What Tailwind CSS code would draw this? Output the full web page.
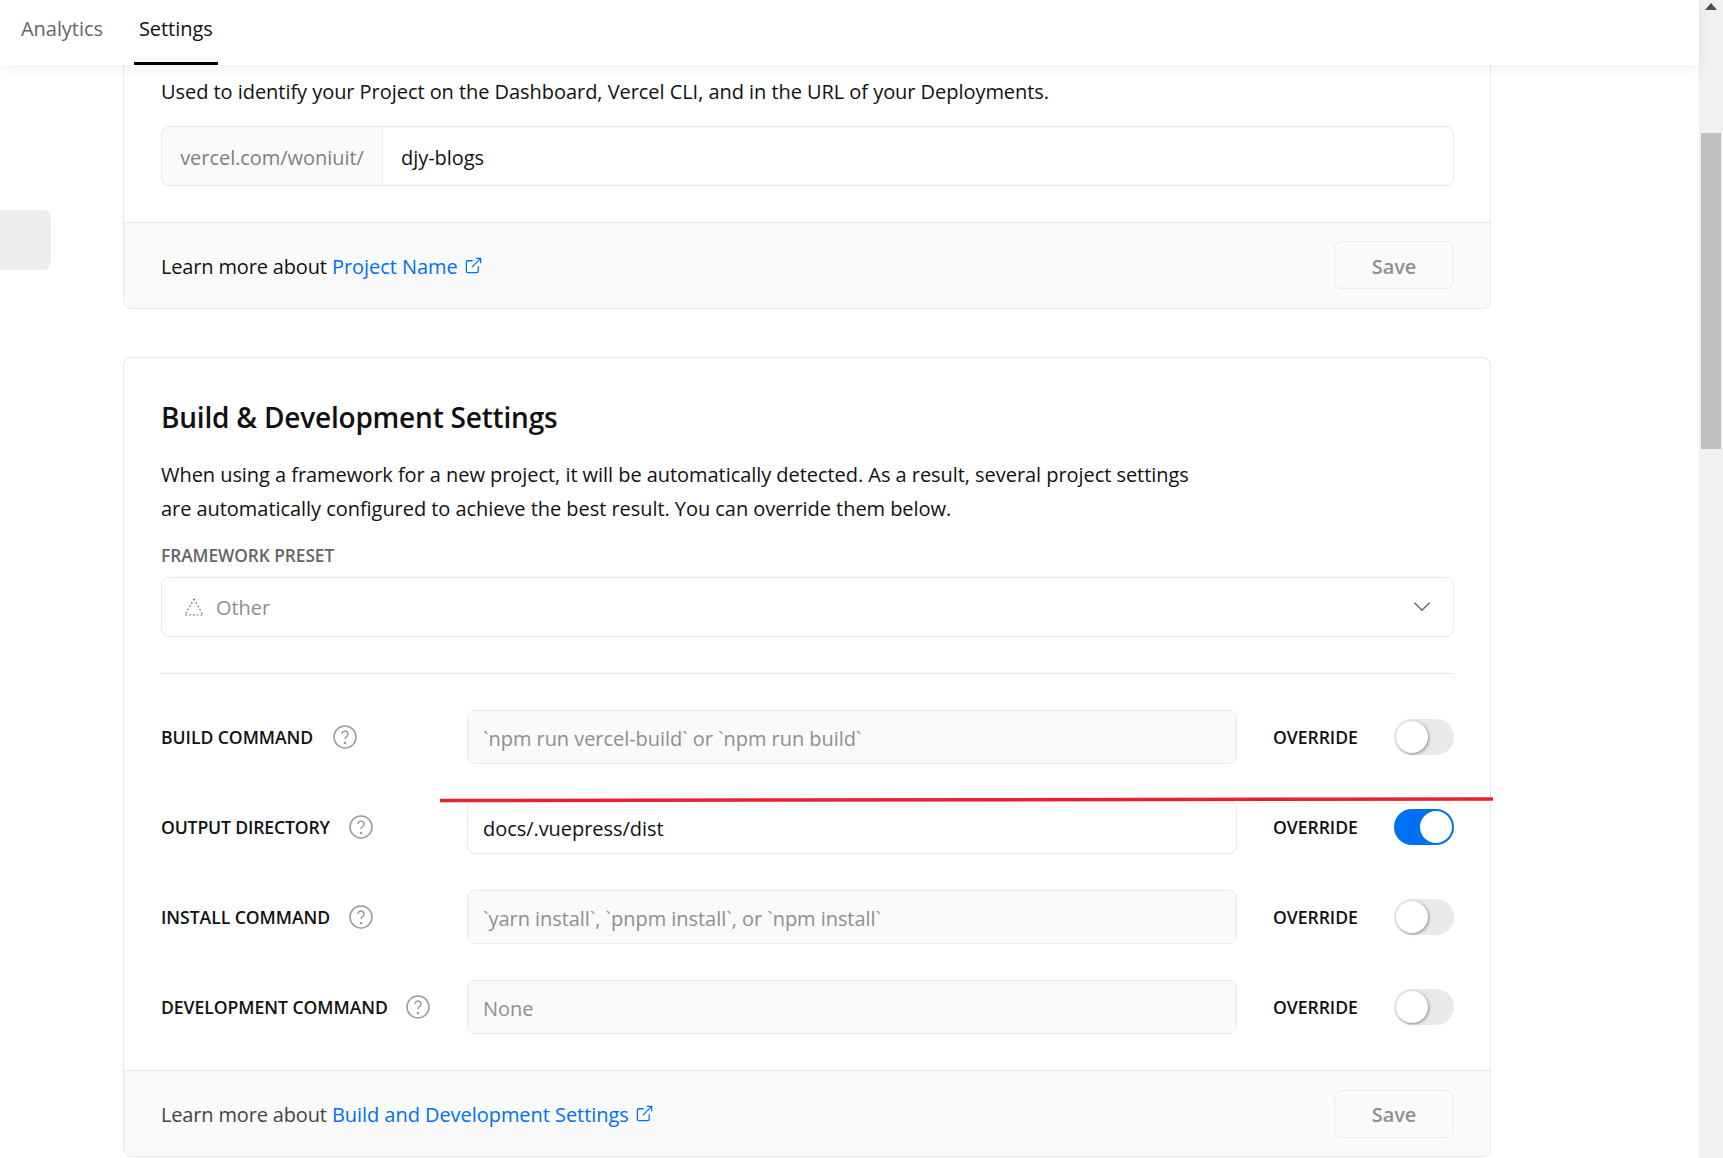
<!DOCTYPE html>
<html lang="en">
<head>
<meta charset="UTF-8">
<title>Project Settings</title>
<script src="https://cdn.jsdelivr.net/npm/@tailwindcss/browser@4"></script>
</head>
<body class="h-[1158px] overflow-hidden bg-white font-['Open_Sans',sans-serif] text-[20px] tracking-[-0.05px] text-[#111]">
<div class="relative h-[1158px]">

  <!-- top tabs -->
  <div class="absolute left-0 top-0 z-10 flex h-[65px] w-[1699px] items-start bg-white pl-[21px] shadow-[0_2px_14px_rgba(0,0,0,0.08)]">
    <div class="pt-[14px] text-[#666]">Analytics</div>
    <div class="ml-[31px] h-[65px] border-b-[3px] border-black px-[5px] pt-[14px]">Settings</div>
  </div>

  <!-- scrollbar -->
  <div class="absolute right-0 top-0 h-full w-[24px] bg-[#f1f1f1]">
    <svg class="absolute left-[6px] top-[3px]" width="12" height="7" viewBox="0 0 12 7"><path d="M6 0 12 7H0Z" fill="#505050"/></svg>
    <div class="mx-[2px] mt-[133px] h-[316px] bg-[#bfbfbf]"></div>
  </div>

  <div class="absolute left-0 top-[210px] h-[60px] w-[51px] rounded-r-lg bg-[#ededed]"></div>

  <main class="ml-[123px] w-[1368px]">
    <!-- project name card -->
    <section class="h-[309px] rounded-b-lg border border-t-0 border-[#eaeaea]">
      <div class="h-[222px] pl-[37px] pt-[76px]">
        <p class="leading-[32px]">Used to identify your Project on the Dashboard, Vercel CLI, and in the URL of your Deployments.</p>
        <div class="mt-[18px] flex h-[60px] w-[1293px] rounded-lg border border-[#eaeaea]">
          <div class="flex w-[221px] items-center justify-center rounded-l-lg border-r border-[#eaeaea] bg-[#fafafa] pt-[4px] text-[#808080]">vercel.com/woniuit/</div>
          <div class="flex items-center pl-[18px] pt-[4px]">djy-blogs</div>
        </div>
      </div>
      <div class="flex h-[86px] items-center justify-between rounded-b-lg border-t border-[#eaeaea] bg-[#fafafa] pl-[37px] pr-[36px]">
        <p class="pt-[2px]"><span class="tracking-[-0.16px]">Learn more about</span> <a class="text-[#0070f3]">Project Name</a>
          <svg class="ml-[1px] inline-block align-[-1px] text-[#0070f3]" width="19" height="19" viewBox="0 0 24 24" fill="none" stroke="currentColor" stroke-width="1.6"><path d="M18 13v6a2 2 0 0 1-2 2H5a2 2 0 0 1-2-2V8a2 2 0 0 1 2-2h6"/><path d="M15 3h6v6"/><path d="M10 14 21 3"/></svg>
        </p>
        <button class="mb-[2px] h-[48px] w-[120px] rounded-lg border border-[#eaeaea] pt-[4px] font-semibold text-[#8f8f8f]">Save</button>
      </div>
    </section>

    <!-- build card -->
    <section class="mt-[48px] h-[800px] rounded-lg border border-[#eaeaea]">
      <div class="pl-[37px]">
        <h2 class="pt-[40px] text-[28px] font-semibold leading-[38px] tracking-[-0.2px]">Build &amp; Development Settings</h2>
        <p class="mt-[22px] w-[1040px] leading-[34px]">When using a framework for a new project, it will be automatically detected. As a result, several project settings are automatically configured to achieve the best result. You can override them below.</p>
        <div class="mt-[18px] text-[17.3px] font-semibold leading-[24px] text-[#666]">FRAMEWORK PRESET</div>
        <div class="mt-[9px] flex h-[60px] w-[1293px] items-center rounded-lg border border-[#eaeaea] px-[21px] text-[#8f8f8f]">
          <svg width="22" height="20" viewBox="0 0 22 20" fill="none" stroke="#666" stroke-width="1.1" stroke-dasharray="1.8 2"><path d="M11 2 20 18H2Z"/></svg>
          <span class="ml-[11px] pt-[2px]">Other</span>
          <svg class="ml-auto" width="20" height="20" viewBox="0 0 24 24" fill="none" stroke="#666" stroke-width="1.7"><path d="m3 7 9 9 9-9"/></svg>
        </div>
        <div class="mt-[36px] w-[1293px] border-t border-[#eaeaea]"></div>
        <div class="mt-[36px] flex w-[1293px] flex-col gap-[36px]">
          <div class="flex h-[54px] items-center">
            <div class="flex w-[306px] items-center text-[17.6px] font-semibold">BUILD COMMAND
              <svg class="ml-[20px]" width="24" height="24" viewBox="0 0 24 24" fill="none" stroke="#999" stroke-width="1.5"><circle cx="12" cy="12" r="11"/><path d="M9 9a3 3 0 1 1 4.5 2.6c-1 .6-1.5 1.2-1.5 2.4"/><circle cx="12" cy="18" r=".6"/></svg>
            </div>
            <div class="flex h-[54px] w-[770px] items-center rounded-lg border border-[#eaeaea] bg-[#fafafa] px-[15px] pt-[4px] text-[#8f8f8f]">`npm run vercel-build` or `npm run build`</div>
            <div class="ml-[36px] text-[17.6px] font-semibold">OVERRIDE</div>
            <div class="ml-auto h-[36px] w-[60px] rounded-full bg-[#e9e9e9] p-[2px]"><div class="h-[32px] w-[32px] rounded-full bg-white shadow-[1px_1px_3px_rgba(0,0,0,0.4)]"></div></div>
          </div>
          <div class="flex h-[54px] items-center">
            <div class="flex w-[306px] items-center text-[17.6px] font-semibold tracking-[-0.15px]">OUTPUT DIRECTORY
              <svg class="ml-[19px]" width="24" height="24" viewBox="0 0 24 24" fill="none" stroke="#999" stroke-width="1.5"><circle cx="12" cy="12" r="11"/><path d="M9 9a3 3 0 1 1 4.5 2.6c-1 .6-1.5 1.2-1.5 2.4"/><circle cx="12" cy="18" r=".6"/></svg>
            </div>
            <div class="flex h-[54px] w-[770px] items-center rounded-lg border border-[#eaeaea] px-[15px] pt-[4px]">docs/.vuepress/dist</div>
            <div class="ml-[36px] text-[17.6px] font-semibold">OVERRIDE</div>
            <div class="ml-auto flex h-[36px] w-[60px] justify-end rounded-full bg-[#0070f3] p-[2px]"><div class="h-[32px] w-[32px] rounded-full bg-white"></div></div>
          </div>
          <div class="flex h-[54px] items-center">
            <div class="flex w-[306px] items-center text-[17.6px] font-semibold">INSTALL COMMAND
              <svg class="ml-[19px]" width="24" height="24" viewBox="0 0 24 24" fill="none" stroke="#999" stroke-width="1.5"><circle cx="12" cy="12" r="11"/><path d="M9 9a3 3 0 1 1 4.5 2.6c-1 .6-1.5 1.2-1.5 2.4"/><circle cx="12" cy="18" r=".6"/></svg>
            </div>
            <div class="flex h-[54px] w-[770px] items-center rounded-lg border border-[#eaeaea] bg-[#fafafa] px-[15px] pt-[4px] text-[#8f8f8f]">`yarn install`, `pnpm install`, or `npm install`</div>
            <div class="ml-[36px] text-[17.6px] font-semibold">OVERRIDE</div>
            <div class="ml-auto h-[36px] w-[60px] rounded-full bg-[#e9e9e9] p-[2px]"><div class="h-[32px] w-[32px] rounded-full bg-white shadow-[1px_1px_3px_rgba(0,0,0,0.4)]"></div></div>
          </div>
          <div class="flex h-[54px] items-center">
            <div class="flex w-[306px] items-center text-[17.6px] font-semibold whitespace-nowrap">DEVELOPMENT COMMAND
              <svg class="ml-[18px]" width="24" height="24" viewBox="0 0 24 24" fill="none" stroke="#999" stroke-width="1.5"><circle cx="12" cy="12" r="11"/><path d="M9 9a3 3 0 1 1 4.5 2.6c-1 .6-1.5 1.2-1.5 2.4"/><circle cx="12" cy="18" r=".6"/></svg>
            </div>
            <div class="flex h-[54px] w-[770px] items-center rounded-lg border border-[#eaeaea] bg-[#fafafa] px-[15px] pt-[4px] text-[#8f8f8f]">None</div>
            <div class="ml-[36px] text-[17.6px] font-semibold">OVERRIDE</div>
            <div class="ml-auto h-[36px] w-[60px] rounded-full bg-[#e9e9e9] p-[2px]"><div class="h-[32px] w-[32px] rounded-full bg-white shadow-[1px_1px_3px_rgba(0,0,0,0.4)]"></div></div>
          </div>
        </div>
      </div>
      <div class="mt-[36px] flex h-[86px] items-center justify-between rounded-b-lg border-t border-[#eaeaea] bg-[#fafafa] pl-[37px] pr-[36px]">
        <p class="pt-[2px] text-[#444]"><span class="tracking-[-0.16px]">Learn more about</span> <a class="text-[#0070f3]">Build and Development Settings</a>
          <svg class="ml-[1px] inline-block align-[-1px] text-[#0070f3]" width="19" height="19" viewBox="0 0 24 24" fill="none" stroke="currentColor" stroke-width="1.6"><path d="M18 13v6a2 2 0 0 1-2 2H5a2 2 0 0 1-2-2V8a2 2 0 0 1 2-2h6"/><path d="M15 3h6v6"/><path d="M10 14 21 3"/></svg>
        </p>
        <button class="h-[48px] w-[120px] rounded-lg border border-[#eaeaea] pt-[2px] font-semibold text-[#8f8f8f]">Save</button>
      </div>
    </section>
  </main>

  <!-- red annotation line -->
  <svg class="absolute left-0 top-0" width="1723" height="1158" fill="none"><path d="M440 800.5 1493 799" stroke="#e8212e" stroke-width="3.5"/></svg>
</div>
</body>
</html>
